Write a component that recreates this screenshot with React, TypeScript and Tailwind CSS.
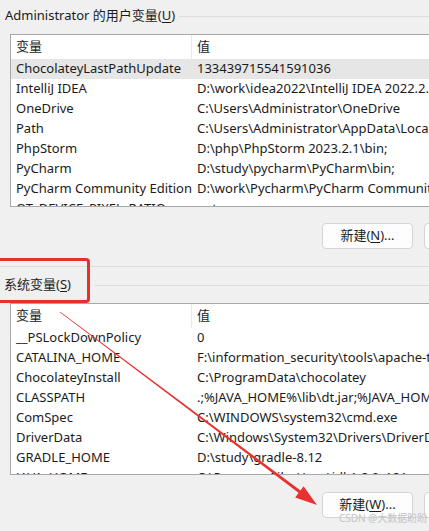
import React from 'react';

type Row = [string, string];

const userVars: Row[] = [
    ['ChocolateyLastPathUpdate', '133439715541591036'],
    ['IntelliJ IDEA', 'D:\\work\\idea2022\\IntelliJ IDEA 2022.2.3\\bin;'],
    ['OneDrive', 'C:\\Users\\Administrator\\OneDrive'],
    ['Path', 'C:\\Users\\Administrator\\AppData\\Local\\Microsoft\\WindowsApps;'],
    ['PhpStorm', 'D:\\php\\PhpStorm 2023.2.1\\bin;'],
    ['PyCharm', 'D:\\study\\pycharm\\PyCharm\\bin;'],
    ['PyCharm Community Edition', 'D:\\work\\Pycharm\\PyCharm Community Edition\\bin;'],
    ['QT_DEVICE_PIXEL_RATIO', 'auto'],
];

const systemVars: Row[] = [
    ['__PSLockDownPolicy', '0'],
    ['CATALINA_HOME', 'F:\\information_security\\tools\\apache-tomcat-9.0'],
    ['ChocolateyInstall', 'C:\\ProgramData\\chocolatey'],
    ['CLASSPATH', '.;%JAVA_HOME%\\lib\\dt.jar;%JAVA_HOME%\\lib\\tools.jar;'],
    ['ComSpec', 'C:\\WINDOWS\\system32\\cmd.exe'],
    ['DriverData', 'C:\\Windows\\System32\\Drivers\\DriverData'],
    ['GRADLE_HOME', 'D:\\study\\gradle-8.12'],
    ['JAVA_HOME', 'C:\\Program Files\\Java\\jdk1.8.0_181'],
];

function VarList({ rows, height, selected }: { rows: Row[]; height: string; selected?: number }) {
    return (
        <div className={`ml-[10px] w-[520px] ${height} shrink-0 border border-[#a8a8a8] bg-white overflow-hidden`}>
            {/* header */}
            <div className="flex h-[24px] items-center">
                <div className="w-[180px] shrink-0 pl-[5px]">变量</div>
                <div className="w-px shrink-0 h-full bg-[#e8e8e8]"></div>
                <div className="pl-[5px]">值</div>
            </div>
            {rows.map(([name, value], i) => (
                <div
                    key={name}
                    className={`flex h-[20px] items-center whitespace-nowrap ${i === selected ? 'bg-[#e6e6e6]' : ''}`}
                >
                    <div className="w-[181px] shrink-0 pl-[5px] overflow-hidden">{name}</div>
                    <div className="pl-[5px] shrink-0">{value}</div>
                </div>
            ))}
        </div>
    );
}

function ButtonRow({ letter }: { letter: string }) {
    return (
        <div className="flex gap-[11px] pl-[322px] shrink-0">
            <button className="w-[91px] h-[26px] shrink-0 rounded-[4px] border border-[#d4d4d4] bg-[#fdfdfd] text-[13px]">
                新建(<span className="underline underline-offset-2">{letter}</span>)...
            </button>
            <button className="w-[91px] h-[26px] shrink-0 rounded-[4px] border border-[#d4d4d4] bg-[#fdfdfd] text-[13px]">
                编辑
            </button>
        </div>
    );
}

export default function App() {
    return (
        <div
            className="relative w-[429px] h-[531px] overflow-hidden bg-[#f0f0f0] text-[13px] text-[#1b1b1b] flex flex-col"
            style={{ fontFamily: '"Noto Sans", "Noto Sans CJK SC", sans-serif' }}
        >
            {/* user variables */}
            <div className="flex items-center h-[20px] mt-[6px] pl-[5px] shrink-0">
                <span className="whitespace-nowrap">
                    Administrator 的用户变量(<span className="underline underline-offset-2">U</span>)
                </span>
                <div className="flex-1 h-px bg-[#dcdcdc] ml-[4px]"></div>
            </div>
            <div className="mt-[8px]">
                <VarList rows={userVars} height="h-[173px]" selected={0} />
            </div>
            <div className="mt-[16px]">
                <ButtonRow letter="N" />
            </div>

            <div className="mt-[17px] h-px bg-[#dcdcdc] shrink-0"></div>

            {/* system variables */}
            <div className="flex items-center h-[20px] mt-[8px] pl-[4px] shrink-0">
                <span className="whitespace-nowrap">
                    系统变量(<span className="underline underline-offset-2">S</span>)
                </span>
                <div className="flex-1 h-px bg-[#dcdcdc] ml-[24px]"></div>
            </div>
            <div className="mt-[8px]">
                <VarList rows={systemVars} height="h-[172px]" />
            </div>
            <div className="mt-[17px]">
                <ButtonRow letter="W" />
            </div>

            {/* annotation: red box */}
            <div className="absolute left-[-6px] top-[258px] w-[96px] h-[45px] border-[3px] border-[#e5302c] rounded-[4px]"></div>

            {/* annotation: red arrow */}
            <svg className="absolute left-0 top-0 pointer-events-none" width="429" height="531">
                <polygon
                    points="59.8,312.3 60.2,311.7 300.9,490.8 299.1,493.2"
                    fill="#e8322f"
                />
                <polygon points="317,505 295.2,497.4 303.6,486.2" fill="#e8322f" />
            </svg>

            {/* watermark */}
            <div className="absolute left-[339px] top-[511px] text-[10px] text-[#c4c4c4] whitespace-nowrap">
                CSDN @大数据盼盼
            </div>
        </div>
    );
}
